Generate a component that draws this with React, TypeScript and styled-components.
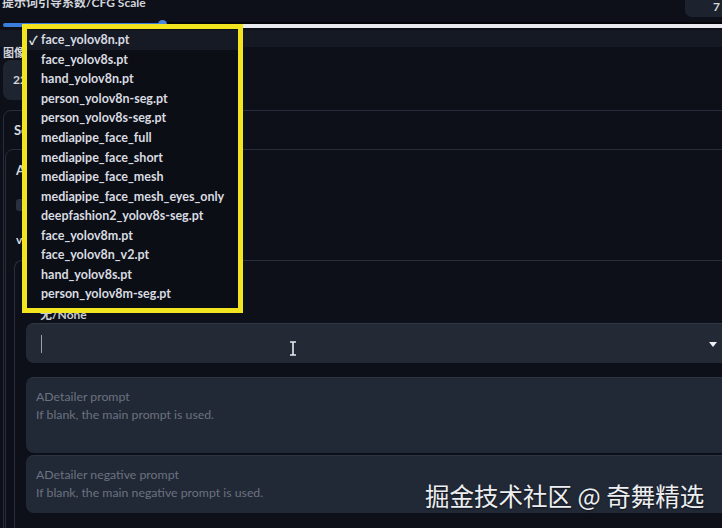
import React from 'react'
import styled, { createGlobalStyle } from 'styled-components'

const GlobalStyle = createGlobalStyle`
    html, body {
        margin: 0;
        padding: 0;
        background: #0e1019;
        overflow: hidden;
    }
`

const models = [
    'face_yolov8n.pt',
    'face_yolov8s.pt',
    'hand_yolov8n.pt',
    'person_yolov8n-seg.pt',
    'person_yolov8s-seg.pt',
    'mediapipe_face_full',
    'mediapipe_face_short',
    'mediapipe_face_mesh',
    'mediapipe_face_mesh_eyes_only',
    'deepfashion2_yolov8s-seg.pt',
    'face_yolov8m.pt',
    'face_yolov8n_v2.pt',
    'hand_yolov8s.pt',
    'person_yolov8m-seg.pt',
]

const Page = styled.div`
    position: relative;
    width: 722px;
    height: 528px;
    overflow: hidden;
    background: #0e1019;
    font-family: Lato, 'Noto Sans CJK SC', sans-serif;
    color: #d5d8de;
`

const CfgRow = styled.div`
    display: flex;
    justify-content: space-between;
    align-items: flex-start;
    height: 20px;
`

const CfgLabel = styled.span`
    margin: -3px 0 0 2px;
    font-size: 12px;
    line-height: 12px;
    font-weight: 700;
    color: #d2d5db;
`

const NumberBox = styled.div`
    width: 30px;
    height: 17px;
    margin-right: -6px;
    padding-left: 5px;
    background: #1c222e;
    border-radius: 0 0 0 7px;
    font-size: 12px;
    font-weight: 700;
    line-height: 14px;
    text-align: right;
    padding-right: 8px;
`

const Slider = styled.div`
    position: relative;
    display: flex;
    align-items: center;
    height: 10px;
    padding-left: 3px;
`

const SliderFill = styled.div`
    width: 162px;
    height: 4px;
    background: #3b7ddd;
    border-radius: 2px 0 0 2px;
`

const SliderRest = styled.div`
    flex: 1;
    height: 4px;
    background: #e9eaee;
    border-top: 2px solid #05060a;
`

const SliderThumb = styled.div`
    position: absolute;
    left: 158px;
    top: 0;
    width: 9px;
    height: 9px;
    border-radius: 50%;
    background: #4a86e0;
`

const Band = styled.div`
    height: 17px;
    background: #141924;
`

const FieldLabel = styled.div`
    height: 12px;
    padding-left: 3px;
    font-size: 11px;
    line-height: 12px;
    font-weight: 700;
    color: #d0d3d9;
`

const SizeInput = styled.div`
    width: 140px;
    height: 40px;
    margin: 1px 0 0 3px;
    padding-left: 10px;
    box-sizing: border-box;
    background: #1e2530;
    border-radius: 8px;
    font-size: 12px;
    font-weight: 700;
    line-height: 40px;
`

const Panel = styled.div<{ $left: number; $top?: number }>`
    margin-left: ${p => p.$left}px;
    margin-top: ${p => p.$top ?? 0}px;
    margin-right: -20px;
    border: 1px solid #272d3a;
    border-radius: 8px 0 0 0;
`

const PanelHeader = styled.div<{ $h: number }>`
    height: ${p => p.$h}px;
    display: flex;
    align-items: center;
    padding-left: 10px;
    font-size: 13px;
    font-weight: 700;
    color: #d6d9df;
`

const CheckRow = styled.div`
    display: flex;
    align-items: center;
    gap: 8px;
    height: 30px;
    padding-left: 10px;
    font-size: 12px;
`

const CheckBox = styled.span`
    width: 11px;
    height: 12px;
    border-radius: 3px;
    background: #2a313e;
`

const Version = styled.div`
    height: 30px;
    padding-left: 10px;
    font-size: 12px;
    line-height: 40px;
    font-weight: 700;
`

const Inner = styled.div`
    margin: 10px -20px 0 8px;
    padding: 0 32px 40px 11px;
    border-left: 1px solid #272d3a;
    border-top: 1px solid #272d3a;
    border-radius: 8px 0 0 0;
`

const ModelLabel = styled.div`
    height: 62px;
    box-sizing: border-box;
    padding: 47px 0 0 14px;
    font-size: 12px;
    line-height: 14px;
    font-weight: 700;
    color: #c8cbd2;
`

const Select = styled.div`
    position: relative;
    display: flex;
    align-items: center;
    height: 39px;
    padding-left: 15px;
    background: #232a36;
    border-top: 1px solid #2f3644;
    border-radius: 8px;
`

const Caret = styled.span`
    width: 1px;
    height: 18px;
    background: #9aa0aa;
`

const Arrow = styled.span`
    position: absolute;
    right: 31px;
    top: 18px;
    width: 0;
    height: 0;
    border-left: 4px solid transparent;
    border-right: 4px solid transparent;
    border-top: 5px solid #eef0f3;
`

const TextArea = styled.div<{ $h: number; $mt: number }>`
    height: ${p => p.$h}px;
    margin-top: ${p => p.$mt}px;
    padding: 10px 0 0 10px;
    box-sizing: border-box;
    background: #222936;
    border-top: 1px solid #2c3341;
    border-radius: 8px;
    font-size: 12.3px;
    line-height: 18px;
    color: #6b7280;
`

const Dropdown = styled.ul`
    position: absolute;
    left: 22px;
    top: 24px;
    width: 221px;
    height: 289px;
    box-sizing: border-box;
    margin: 0;
    padding: 1px 0 0;
    list-style: none;
    background: #0c0e16;
    border: 5px solid #f2e41e;
`

const Item = styled.li<{ $active?: boolean }>`
    display: flex;
    align-items: center;
    height: 19.55px;
    padding-left: 2px;
    background: ${p => (p.$active ? '#151a25' : 'transparent')};
    font-size: 12.5px;
    font-weight: 700;
    color: #d9dbe0;
    white-space: nowrap;
`

const Check = styled.span`
    width: 12px;
    font-size: 12px;
    color: #e6e8ec;
`

const Cursor = styled.svg`
    position: absolute;
    left: 289px;
    top: 341px;
`

const Watermark = styled.div`
    position: absolute;
    left: 425px;
    top: 481px;
    font-family: 'Noto Sans CJK SC', sans-serif;
    font-size: 24.5px;
    line-height: 30px;
    color: #eceef1;
    text-shadow: 0 1px 2px rgba(0, 0, 0, 0.6);
    white-space: nowrap;
`

export default function App() {
    return (
        <Page>
            <GlobalStyle />
            <CfgRow>
                <CfgLabel>提示词引导系数/CFG Scale</CfgLabel>
                <NumberBox>7</NumberBox>
            </CfgRow>
            <Slider>
                <SliderFill />
                <SliderRest />
                <SliderThumb />
            </Slider>
            <Band />
            <FieldLabel>图像尺寸</FieldLabel>
            <SizeInput>2233</SizeInput>
            <Panel $left={3} $top={10}>
                <PanelHeader $h={38}>Seed</PanelHeader>
                <Panel $left={1}>
                    <PanelHeader $h={40}>ADetailer</PanelHeader>
                    <CheckRow>
                        <CheckBox />
                        Enable ADetailer
                    </CheckRow>
                    <Version>v24</Version>
                    <Inner>
                        <ModelLabel>无/None</ModelLabel>
                        <Select>
                            <Caret />
                            <Arrow />
                        </Select>
                        <TextArea $h={76} $mt={14}>
                            ADetailer prompt
                            <br />
                            If blank, the main prompt is used.
                        </TextArea>
                        <TextArea $h={58} $mt={2}>
                            ADetailer negative prompt
                            <br />
                            If blank, the main negative prompt is used.
                        </TextArea>
                    </Inner>
                </Panel>
            </Panel>

            <Dropdown>
                {models.map((m, i) => (
                    <Item key={m} $active={i === 0}>
                        <Check>{i === 0 ? '✓' : ''}</Check>
                        {m}
                    </Item>
                ))}
            </Dropdown>

            <Cursor width="8" height="15" viewBox="0 0 8 15">
                <path d="M1 1h6M4 1v13M1 14h6" stroke="#e8eaee" strokeWidth="1.6" fill="none" />
            </Cursor>

            <Watermark>掘金技术社区 @ 奇舞精选</Watermark>
        </Page>
    )
}
